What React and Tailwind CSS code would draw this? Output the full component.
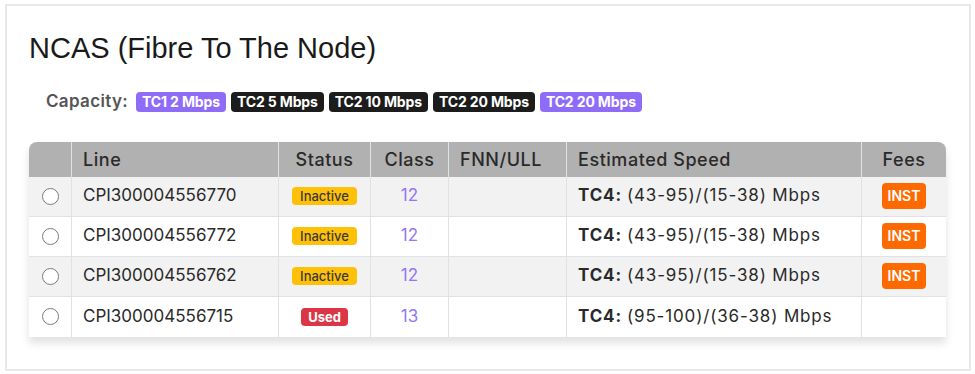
const caps = [
  { label: "TC1 2 Mbps", purple: true },
  { label: "TC2 5 Mbps" },
  { label: "TC2 10 Mbps" },
  { label: "TC2 20 Mbps" },
  { label: "TC2 20 Mbps", purple: true },
];

const rows = [
  { line: "CPI300004556770", status: "Inactive", cls: "12", speed: "(43-95)/(15-38) Mbps", fee: true },
  { line: "CPI300004556772", status: "Inactive", cls: "12", speed: "(43-95)/(15-38) Mbps", fee: true },
  { line: "CPI300004556762", status: "Inactive", cls: "12", speed: "(43-95)/(15-38) Mbps", fee: true },
  { line: "CPI300004556715", status: "Used", cls: "13", speed: "(95-100)/(36-38) Mbps", fee: false },
];

const cols = "grid grid-cols-[43px_207px_92px_78px_118px_295px_84px]";

export default function App() {
  return (
    <div className="w-[975px] h-[374px] bg-white pt-[4px] pl-[5px]">
      <div className="w-[966px] h-[367px] border-2 border-[#e6e8eb] pl-[22px] pt-[26px]">
        {/* Title */}
        <h1 className="font-['Liberation_Sans',Arial,sans-serif] text-[29px] leading-[32px] text-[#1a1a1a]">
          NCAS (Fibre To The Node)
        </h1>

        {/* Capacity */}
        <div className="flex items-center mt-[25px] ml-[17px] font-['Inter',sans-serif]">
          <span className="text-[17px] font-semibold text-[#555] mr-[8px] tracking-[0.02em]">Capacity:</span>
          <div className="flex gap-[5px]">
            {caps.map((c, i) => (
              <span
                key={i}
                className={
                  "h-[20px] px-[6px] rounded-[4px] text-[14px] font-bold leading-[20px] text-white tracking-[-0.01em] " +
                  (c.purple ? "bg-[#8f6cf7]" : "bg-[#1c1c1c]")
                }
              >
                {c.label}
              </span>
            ))}
          </div>
        </div>

        {/* Table */}
        <div className="mt-[27px] w-[917px] rounded-t-[8px] shadow-[0_6px_8px_rgba(0,0,0,0.12)] font-['Inter',sans-serif] text-[#2a2a2a]">
          <div className={cols + " h-[35px] bg-[#b1b1b1] rounded-t-[8px] text-[18px] font-medium tracking-[0.03em]"}>
            <div className="border-r border-[#dfe3e8]" />
            <div className="flex items-center pl-[11px] border-r border-[#dfe3e8]">Line</div>
            <div className="flex items-center justify-center border-r border-[#dfe3e8]">Status</div>
            <div className="flex items-center justify-center border-r border-[#dfe3e8]">Class</div>
            <div className="flex items-center pl-[11px] border-r border-[#dfe3e8]">FNN/ULL</div>
            <div className="flex items-center pl-[11px] border-r border-[#dfe3e8]">Estimated Speed</div>
            <div className="flex items-center justify-center">Fees</div>
          </div>
          {rows.map((r, i) => (
            <div
              key={i}
              className={cols + " h-[40px] text-[17px] " + (i % 2 === 0 ? "bg-[#f2f2f2]" : "bg-white") + (i < 3 ? " border-b border-[#dfe3e8]" : "")}
            >
              <div className="flex items-center justify-center border-r border-[#dfe3e8]">
                <span className="w-[17px] h-[17px] rounded-full border-[1.5px] border-[#7a7a7a] bg-white" />
              </div>
              <div className="flex items-center pl-[11px] border-r border-[#dfe3e8]">{r.line}</div>
              <div className="flex items-center justify-center border-r border-[#dfe3e8]">
                {r.status === "Inactive" ? (
                  <span className="h-[18px] px-[8px] rounded-[4px] bg-[#ffc107] text-[13px] leading-[18px] font-medium text-[#3a3a3a]">Inactive</span>
                ) : (
                  <span className="h-[18px] px-[7px] rounded-[4px] bg-[#dc3545] text-[13px] leading-[18px] font-bold text-white">Used</span>
                )}
              </div>
              <div className="flex items-center justify-center border-r border-[#dfe3e8] text-[#9377f5]">{r.cls}</div>
              <div className="border-r border-[#dfe3e8]" />
              <div className="flex items-center pl-[11px] border-r border-[#dfe3e8] tracking-[0.05em]">
                <span className="font-bold mr-[5px]">TC4:</span>
                {r.speed}
              </div>
              <div className="flex items-center justify-center">
                {r.fee && (
                  <span className="h-[26px] px-[6px] rounded-[4px] bg-[#ff6a00] text-white text-[14px] font-semibold leading-[26px]">INST</span>
                )}
              </div>
            </div>
          ))}
        </div>
      </div>
    </div>
  );
}
